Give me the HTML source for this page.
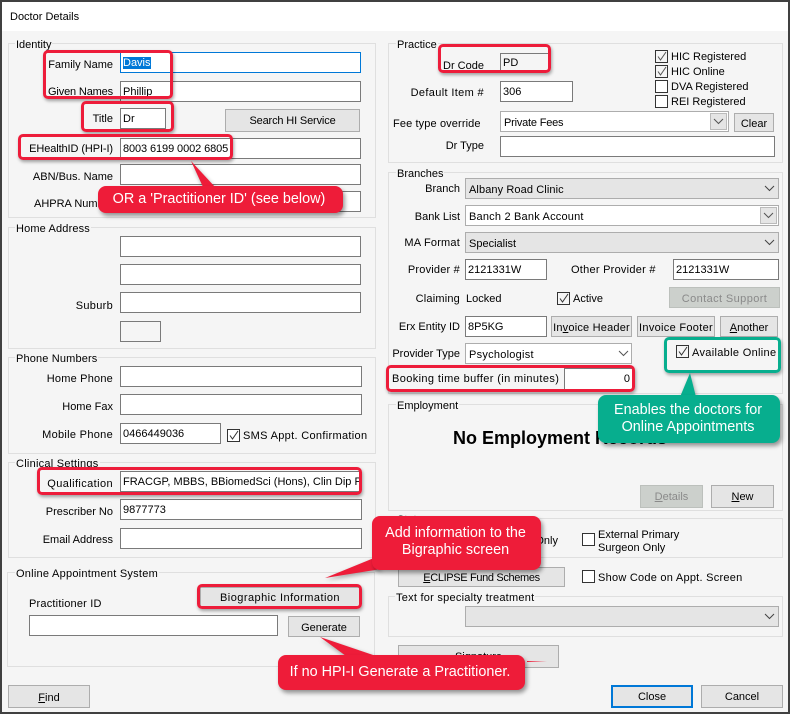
<!DOCTYPE html>
<html><head><meta charset="utf-8"><style>
html,body{margin:0;padding:0}
body{position:relative;width:790px;height:714px;overflow:hidden;background:#f5f5f5;font:11px/14px "Liberation Sans",sans-serif;color:#000}
div{box-sizing:border-box}
.a{position:absolute}
.g{position:absolute;border:1px solid #dfdfdf}
.l{position:absolute;background:#f5f5f5;padding:0 1px;white-space:nowrap;line-height:14px;margin-top:1px}
.t{position:absolute;white-space:nowrap;line-height:14px;margin-top:1px}
.i{position:absolute;background:#fff;border:1px solid #7a7a7a;padding:3px 2px;line-height:14px;white-space:nowrap;overflow:hidden}
.b{position:absolute;background:#e5e5e5;border:1px solid #adadad;text-align:center;white-space:nowrap;line-height:18px;padding-top:1px}
.d{background:#ccd0cc;color:#8a8a8a;border-color:#bcc0bc}
.s{position:absolute;background:#e5e5e5;border:1px solid #adadad;padding:4px 3px;line-height:14px;white-space:nowrap}
.c{position:absolute;width:13px;height:13px;background:#fff;border:1px solid #333}
.c svg{position:absolute;left:0;top:0}
.ar{position:absolute;width:11px;height:7px}
.h{position:absolute;border:3px solid #ed1c3a;border-radius:5px;box-shadow:1px 2px 3px rgba(0,0,0,.35)}
.co{position:absolute;background:#ee1c39;color:#fff;border-radius:8px;font-size:14.4px;line-height:17px;text-align:center;box-shadow:2px 3px 4px rgba(0,0,0,.4);white-space:nowrap}
u{text-decoration:underline}
</style></head><body>
<div class="a" style="left:0;top:0;width:790px;height:31px;background:#fff"></div>
<div class="t" style="left:10px;top:9px">Doctor Details</div>

<div class="g" style="left:8px;top:43px;width:368px;height:175px"></div><div class="l" style="left:15px;top:37px">Identity</div>
<div class="g" style="left:8px;top:227px;width:368px;height:122px"></div><div class="l" style="left:15px;top:221px;letter-spacing:.15px">Home Address</div>
<div class="g" style="left:8px;top:357px;width:368px;height:97px"></div><div class="l" style="left:15px;top:351px;letter-spacing:.15px">Phone Numbers</div>
<div class="g" style="left:8px;top:462px;width:368px;height:96px"></div><div class="l" style="left:15px;top:456px;letter-spacing:.25px">Clinical Settings</div>
<div class="g" style="left:7px;top:572px;width:368px;height:95px"></div><div class="l" style="left:15px;top:566px;letter-spacing:.25px">Online Appointment System</div>

<div class="t" style="right:677px;top:57px">Family Name</div>
<div class="i" style="left:120px;top:52px;width:241px;height:21px;border-color:#0078d7"><span style="background:#0078d7;color:#fff">Davis</span></div>
<div class="t" style="right:677px;top:84px;letter-spacing:-.15px">Given Names</div>
<div class="i" style="left:120px;top:81px;width:241px;height:21px">Phillip</div>
<div class="t" style="right:677px;top:111px">Title</div>
<div class="i" style="left:120px;top:108px;width:46px;height:21px">Dr</div>
<div class="b" style="left:225px;top:109px;width:135px;height:23px;line-height:21px;letter-spacing:-.15px">Search HI Service</div>
<div class="t" style="right:677px;top:141px;letter-spacing:-.1px">EHealthID (HPI-I)</div>
<div class="i" style="left:120px;top:138px;width:241px;height:21px;letter-spacing:-.1px">8003 6199 0002 6805</div>
<div class="t" style="right:677px;top:169px">ABN/Bus. Name</div>
<div class="i" style="left:120px;top:164px;width:241px;height:21px"></div>
<div class="t" style="left:34px;top:196px">AHPRA Number</div>
<div class="i" style="left:120px;top:191px;width:241px;height:21px"></div>

<div class="i" style="left:120px;top:236px;width:241px;height:21px"></div>
<div class="i" style="left:120px;top:264px;width:241px;height:21px"></div>
<div class="t" style="right:677px;top:298px;letter-spacing:.3px">Suburb</div>
<div class="i" style="left:120px;top:292px;width:241px;height:21px"></div>
<div class="i" style="left:120px;top:321px;width:41px;height:21px;background:#f5f5f5"></div>

<div class="t" style="right:677px;top:371px;letter-spacing:.2px">Home Phone</div>
<div class="i" style="left:120px;top:366px;width:242px;height:21px"></div>
<div class="t" style="right:677px;top:399px">Home Fax</div>
<div class="i" style="left:120px;top:394px;width:242px;height:21px"></div>
<div class="t" style="right:677px;top:427px;letter-spacing:.3px">Mobile Phone</div>
<div class="i" style="left:120px;top:423px;width:101px;height:21px">0466449036</div>
<div class="c" style="left:227px;top:429px"><svg width="11" height="11"><path d="M2 5.500L4.500 9L10 1" fill="none" stroke="#333" stroke-width="1"/></svg></div>
<div class="t" style="left:243px;top:428px;letter-spacing:.32px">SMS Appt. Confirmation</div>

<div class="t" style="right:677px;top:476px;letter-spacing:.4px">Qualification</div>
<div class="i" style="left:120px;top:471px;width:241px;height:21px">FRACGP, MBBS, BBiomedSci (Hons), Clin Dip Pall Med</div>
<div class="t" style="right:677px;top:504px">Prescriber No</div>
<div class="i" style="left:120px;top:499px;width:242px;height:21px">9877773</div>
<div class="t" style="right:677px;top:532px">Email Address</div>
<div class="i" style="left:120px;top:528px;width:242px;height:21px"></div>

<div class="t" style="left:29px;top:596px;letter-spacing:.2px">Practitioner ID</div>
<div class="b" style="left:200px;top:587px;width:160px;height:20px;letter-spacing:.45px">Biographic Information</div>
<div class="i" style="left:29px;top:615px;width:249px;height:21px"></div>
<div class="b" style="left:288px;top:616px;width:72px;height:21px;line-height:20px">Generate</div>
<div class="b" style="left:8px;top:685px;width:82px;height:23px;line-height:22px"><u>F</u>ind</div>

<div class="g" style="left:388px;top:43px;width:395px;height:120px"></div><div class="l" style="left:396px;top:37px">Practice</div>
<div class="g" style="left:388px;top:172px;width:395px;height:222px"></div><div class="l" style="left:396px;top:166px">Branches</div>
<div class="g" style="left:388px;top:404px;width:395px;height:107px"></div><div class="l" style="left:396px;top:398px">Employment</div>
<div class="g" style="left:388px;top:518px;width:395px;height:40px"></div><div class="l" style="left:396px;top:512px">Status</div>
<div class="g" style="left:388px;top:596px;width:395px;height:41px"></div><div class="l" style="left:395px;top:590px;letter-spacing:.25px">Text for specialty treatment</div>

<div class="t" style="left:443px;top:58px">Dr Code</div>
<div class="i" style="left:500px;top:53px;width:50px;height:20px;background:#f5f5f5;border-bottom:0;border-right:0;padding-top:2px">PD</div>
<div class="t" style="right:306px;top:85px;letter-spacing:.35px">Default Item #</div>
<div class="i" style="left:500px;top:81px;width:73px;height:21px">306</div>
<div class="c" style="left:655px;top:50px;background:#f5f5f5"><svg width="11" height="11"><path d="M2 5.500L4.500 9L10 1" fill="none" stroke="#555" stroke-width="1"/></svg></div>
<div class="t" style="left:671px;top:49px">HIC Registered</div>
<div class="c" style="left:655px;top:65px;background:#f5f5f5"><svg width="11" height="11"><path d="M2 5.500L4.500 9L10 1" fill="none" stroke="#555" stroke-width="1"/></svg></div>
<div class="t" style="left:671px;top:64px">HIC Online</div>
<div class="c" style="left:655px;top:80px"></div>
<div class="t" style="left:671px;top:79px">DVA Registered</div>
<div class="c" style="left:655px;top:95px"></div>
<div class="t" style="left:671px;top:94px">REI Registered</div>
<div class="t" style="left:393px;top:116px;letter-spacing:.12px">Fee type override</div>
<div class="i" style="left:500px;top:111px;width:229px;height:21px;border-color:#adadad;padding:4px 3px;letter-spacing:-.2px">Private Fees</div>
<div class="a" style="left:710px;top:113px;width:17px;height:17px;background:#e5e5e5;border:1px solid #bbb"></div>
<svg class="ar" style="left:713px;top:118px" viewBox="0 0 11 7"><path d="M1 1L5.500 5.500L10 1" fill="none" stroke="#555"/></svg>
<div class="b" style="left:734px;top:113px;width:40px;height:19px">Clear</div>
<div class="t" style="right:306px;top:138px">Dr Type</div>
<div class="i" style="left:500px;top:136px;width:275px;height:21px"></div>

<div class="t" style="right:330px;top:181px">Branch</div>
<div class="s" style="left:465px;top:178px;width:314px;height:21px;letter-spacing:.1px">Albany Road Clinic</div>
<svg class="ar" style="left:764px;top:185px" viewBox="0 0 11 7"><path d="M1 1L5.500 5.500L10 1" fill="none" stroke="#444"/></svg>
<div class="t" style="right:330px;top:209px">Bank List</div>
<div class="s" style="left:465px;top:205px;width:314px;height:21px;background:#fff;letter-spacing:.2px">Banch 2 Bank Account</div>
<div class="a" style="left:760px;top:207px;width:17px;height:17px;background:#e5e5e5;border:1px solid #bbb"></div>
<svg class="ar" style="left:763px;top:212px" viewBox="0 0 11 7"><path d="M1 1L5.500 5.500L10 1" fill="none" stroke="#555"/></svg>
<div class="t" style="right:330px;top:235px;letter-spacing:.2px">MA Format</div>
<div class="s" style="left:465px;top:232px;width:314px;height:21px">Specialist</div>
<svg class="ar" style="left:764px;top:239px" viewBox="0 0 11 7"><path d="M1 1L5.500 5.500L10 1" fill="none" stroke="#444"/></svg>
<div class="t" style="right:330px;top:262px;letter-spacing:.2px">Provider #</div>
<div class="i" style="left:465px;top:259px;width:82px;height:21px">2121331W</div>
<div class="t" style="left:571px;top:262px;letter-spacing:.25px">Other Provider #</div>
<div class="i" style="left:673px;top:259px;width:106px;height:21px">2121331W</div>
<div class="t" style="right:330px;top:291px;letter-spacing:.2px">Claiming</div>
<div class="t" style="left:466px;top:291px">Locked</div>
<div class="c" style="left:557px;top:292px;background:#f5f5f5"><svg width="11" height="11"><path d="M2 5.500L4.500 9L10 1" fill="none" stroke="#333" stroke-width="1"/></svg></div>
<div class="t" style="left:573px;top:291px">Active</div>
<div class="b d" style="left:669px;top:287px;width:111px;height:21px;line-height:20px;letter-spacing:.4px">Contact Support</div>
<div class="t" style="right:330px;top:319px">Erx Entity ID</div>
<div class="i" style="left:465px;top:316px;width:82px;height:21px">8P5KG</div>
<div class="b" style="left:551px;top:316px;width:81px;height:21px;line-height:20px;letter-spacing:.2px">In<u>v</u>oice Header</div>
<div class="b" style="left:637px;top:316px;width:78px;height:21px;line-height:20px;letter-spacing:.3px">Invoice Footer</div>
<div class="b" style="left:720px;top:316px;width:58px;height:21px;line-height:20px"><u>A</u>nother</div>
<div class="t" style="right:330px;top:346px">Provider Type</div>
<div class="s" style="left:465px;top:343px;width:167px;height:21px;background:#fff;letter-spacing:.25px">Psychologist</div>
<svg class="ar" style="left:618px;top:350px" viewBox="0 0 11 7"><path d="M1 1L5.500 5.500L10 1" fill="none" stroke="#555"/></svg>
<div class="t" style="left:392px;top:371px;letter-spacing:.38px">Booking time buffer (in minutes)</div>
<div class="i" style="left:564px;top:368px;width:68px;height:21px;text-align:right;padding-right:2px;border-right:0;border-bottom:0">0</div>
<div class="c" style="left:676px;top:345px;background:#f5f5f5"><svg width="11" height="11"><path d="M2 5.500L4.500 9L10 1" fill="none" stroke="#333" stroke-width="1"/></svg></div>
<div class="t" style="left:692px;top:345px;letter-spacing:.32px">Available Online</div>

<div class="t" style="left:453px;top:428px;margin:0;font:bold 18px/20px 'Liberation Sans',sans-serif">No Employment Records</div>
<div class="b d" style="left:640px;top:485px;width:63px;height:23px;line-height:20px"><u>D</u>etails</div>
<div class="b" style="left:711px;top:485px;width:63px;height:23px;line-height:20px"><u>N</u>ew</div>

<div class="t" style="right:232px;top:533px">Only</div>
<div class="c" style="left:582px;top:533px"></div>
<div class="t" style="left:598px;top:527px">External Primary</div>
<div class="t" style="left:598px;top:540px">Surgeon Only</div>
<div class="b" style="left:398px;top:567px;width:167px;height:20px;letter-spacing:-.35px"><u>E</u>CLIPSE Fund Schemes</div>
<div class="c" style="left:582px;top:570px"></div>
<div class="t" style="left:598px;top:570px;letter-spacing:.25px">Show Code on Appt. Screen</div>
<div class="s" style="left:465px;top:606px;width:314px;height:21px"></div>
<svg class="ar" style="left:764px;top:613px" viewBox="0 0 11 7"><path d="M1 1L5.500 5.500L10 1" fill="none" stroke="#444"/></svg>
<div class="b" style="left:398px;top:645px;width:161px;height:23px;line-height:21px">Signature</div>
<div class="a" style="left:527px;top:661px;width:20px;height:1px;background:linear-gradient(90deg,#ee1c39,#e5e5e5)"></div>

<div class="b" style="left:611px;top:685px;width:82px;height:23px;border:2px solid #0078d7;line-height:19px">Close</div>
<div class="b" style="left:701px;top:685px;width:82px;height:23px;line-height:21px">Cancel</div>

<div class="h" style="left:43px;top:50px;width:130px;height:49px"></div>
<div class="h" style="left:81px;top:101px;width:93px;height:31px"></div>
<div class="h" style="left:18px;top:134px;width:215px;height:26px"></div>
<div class="h" style="left:37px;top:467px;width:325px;height:28px"></div>
<div class="h" style="left:197px;top:584px;width:165px;height:25px"></div>
<div class="h" style="left:438px;top:44px;width:113px;height:29px"></div>
<div class="h" style="left:386px;top:365px;width:249px;height:27px"></div>
<div class="h" style="left:664px;top:337px;width:117px;height:36px;border-color:#07ae8e"></div>

<svg class="a" style="left:0;top:0" width="790" height="714">
<g style="filter:drop-shadow(1px 2px 2px rgba(0,0,0,.35))">
<path d="M191 161L203 187H215Z" fill="#ee1c39"/>
<path d="M325 578L374 558L381 569Z" fill="#ee1c39"/>
<path d="M320 637L376 656H346Z" fill="#ee1c39"/>
<path d="M690 373L680 397H696Z" fill="#07ae8e"/>
</g></svg>
<div class="co" style="left:98px;top:186px;width:245px;height:27px;line-height:26px;padding-right:3px">OR a 'Practitioner ID' (see below)</div>
<div class="co" style="left:372px;top:516px;width:169px;height:54px;padding:9px 2px 0 0">Add information to the<br>Bigraphic screen</div>
<div class="co" style="left:278px;top:655px;width:247px;height:35px;line-height:35px;padding-right:3px">If no HPI-I Generate a Practitioner.</div>
<div class="co" style="left:598px;top:395px;width:182px;height:48px;background:#07ae8e;padding:7px 2px 0 0">Enables the doctors for<br>Online Appointments</div>

<div class="a" style="left:0;top:0;width:790px;height:714px;border-style:solid;border-color:#404040;border-width:2px 2px 2px 2px"></div>
</body></html>
